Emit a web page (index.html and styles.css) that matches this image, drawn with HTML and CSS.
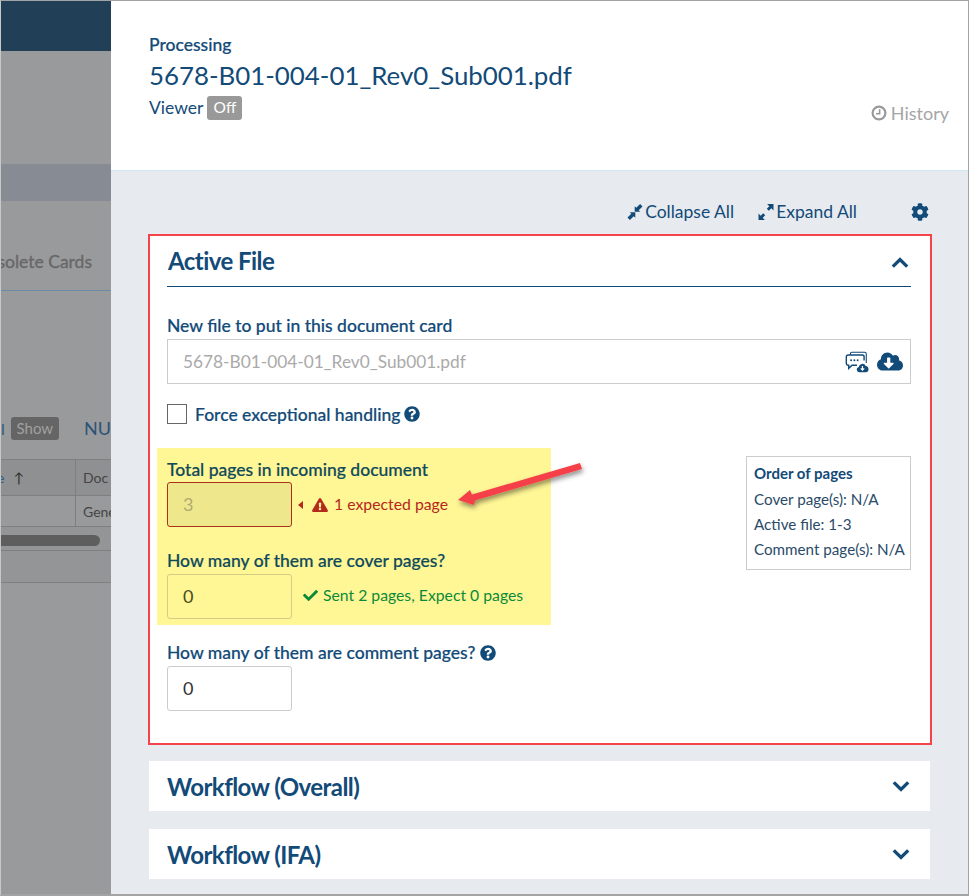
FILE: index.html
```html
<!DOCTYPE html>
<html lang="en">
<head>
<meta charset="utf-8">
<title>Processing</title>
<link rel="stylesheet" href="styles.css">
</head>
<body>
<div class="frame">
  <aside class="backdrop">
    <div class="bd-top"></div>
    <div class="bd-band"></div>
    <div class="bd-tab">Obsolete Cards</div>
    <div class="bd-rule"></div>
    <div class="bd-show"><span class="bd-bar">l</span><span class="bd-badge">Show</span><span class="bd-nu">NU</span></div>
    <div class="bd-row bd-row-head"><span class="bd-c1"><b>e</b> ↑</span><span class="bd-c2">Doc C</span></div>
    <div class="bd-row bd-row-body"><span class="bd-c1"></span><span class="bd-c2">Gene</span></div>
    <div class="bd-scroll"><div class="bd-thumb"></div></div>
    <div class="bd-foot"></div>
  </aside>
  <main class="drawer">
    <header class="head">
      <div class="head-main">
        <div class="proc">Processing</div>
        <div class="fname">5678-B01-004-01_Rev0_Sub001.pdf</div>
        <div class="viewer">Viewer <span class="off">Off</span></div>
      </div>
      <div class="history">
        <svg class="i-clock" viewBox="0 0 16 16"><circle cx="8" cy="8" r="6.4" fill="none" stroke="currentColor" stroke-width="2.2"/><path d="M8.6 4.2v4.6H5" fill="none" stroke="currentColor" stroke-width="1.6"/></svg>
        <span>History</span>
      </div>
    </header>
    <div class="body">
      <div class="tools">
        <span class="tool"><svg class="i-arr" viewBox="0 0 16 16"><path d="M.5 13.6 4.300 9.800 2.800 8.200H8.300V13.700L6.700 12.200 2.900 16ZM15.500 2.400 11.700 6.200 13.200 7.800H7.700V2.300L9.300 3.800 13.100 0Z" fill="currentColor"/></svg>Collapse All</span>
        <span class="tool"><svg class="i-arr" viewBox="0 0 16 16"><path d="M.5 16V9.600L2.700 11.800 5.200 9.300 7.200 11.300 4.700 13.800 6.900 16ZM15.500 0V6.400L13.300 4.200 10.800 6.700 8.800 4.700 11.300 2.200 9.100 0Z" fill="currentColor"/></svg>Expand All</span>
        <svg class="i-cog" viewBox="0 0 512 512"><path fill="currentColor" d="M487.4 315.7l-42.6-24.6c4.3-23.2 4.3-47 0-70.2l42.6-24.6c4.9-2.8 7.1-8.6 5.5-14-11.1-35.6-30-67.8-54.7-94.6-3.8-4.1-10-5.1-14.8-2.3L380.8 110c-17.9-15.4-38.5-27.3-60.8-35.1V25.8c0-5.6-3.9-10.5-9.4-11.7-36.7-8.2-74.3-7.8-109.2 0-5.5 1.2-9.4 6.1-9.4 11.7V75c-22.2 7.9-42.8 19.8-60.8 35.1L88.7 85.5c-4.9-2.8-11-1.9-14.8 2.3-24.7 26.7-43.6 58.9-54.7 94.6-1.7 5.4.6 11.2 5.5 14L67.3 221c-4.3 23.2-4.3 47 0 70.2l-42.6 24.6c-4.9 2.8-7.1 8.6-5.5 14 11.1 35.6 30 67.8 54.7 94.6 3.8 4.1 10 5.1 14.8 2.3l42.6-24.6c17.9 15.4 38.5 27.3 60.8 35.1v49.2c0 5.6 3.9 10.5 9.4 11.7 36.7 8.2 74.3 7.8 109.2 0 5.5-1.2 9.4-6.1 9.4-11.7v-49.2c22.2-7.9 42.8-19.8 60.8-35.1l42.6 24.6c4.9 2.8 11 1.9 14.8-2.3 24.7-26.7 43.6-58.9 54.7-94.6 1.5-5.5-.7-11.3-5.6-14.1zM256 336c-44.1 0-80-35.9-80-80s35.9-80 80-80 80 35.9 80 80-35.9 80-80 80z"/></svg>
      </div>
      <section class="panel">
        <div class="panel-head">
          <h2>Active File</h2>
          <svg class="i-chev" viewBox="0 0 16 10"><path d="M1.6 8.2 8 2l6.4 6.2" fill="none" stroke="currentColor" stroke-width="3"/></svg>
        </div>
        <label class="lbl lbl-file">New file to put in this document card</label>
        <div class="filebox">
          <span>5678-B01-004-01_Rev0_Sub001.pdf</span>
          <svg class="i-chat" viewBox="0 0 22 20"><path d="M5 3.5V2.2C5 1.5 5.5 1 6.2 1H18C18.8 1 19.5 1.6 19.5 2.4V11" fill="none" stroke="currentColor" stroke-width="1"/><path d="M3 3.6H15.800C16.700 3.600 17.500 4.300 17.500 5.200V8.600M11 13H6.500L3.400 15.800V13H3C2 13 1.200 12.200 1.200 11.200V5.400C1.200 4.400 2 3.600 3 3.600" fill="none" stroke="currentColor" stroke-width="1.300"/><circle cx="5.600" cy="8.300" r=".9" fill="currentColor"/><circle cx="8.600" cy="8.300" r=".9" fill="currentColor"/><circle cx="11.600" cy="8.300" r=".9" fill="currentColor"/><path fill="currentColor" d="M13 19.500A2.500 2.500 0 0 1 12.600 14.600 3.400 3.400 0 0 1 19 13.600 3 3 0 0 1 19.200 19.500Z"/><path d="M16 13.600V17.400M14.400 15.800 16 17.400 17.600 15.800" fill="none" stroke="#fff" stroke-width="1.100"/></svg>
          <svg class="i-cloud" viewBox="0 0 640 512"><path fill="currentColor" d="M537.6 226.6c4.1-10.7 6.4-22.4 6.4-34.6 0-53-43-96-96-96-19.7 0-38.1 6-53.3 16.2C367 64.2 315.3 32 256 32c-88.4 0-160 71.6-160 160 0 2.7.1 5.4.2 8.1C40.2 219.8 0 273.2 0 336c0 79.5 64.5 144 144 144h368c70.7 0 128-57.3 128-128 0-61.9-44-113.6-102.4-125.4zm-132.9 88.7L299.3 420.7c-6.2 6.2-16.4 6.2-22.6 0L171.3 315.3c-10.1-10.1-2.9-27.3 11.3-27.3H248V176c0-8.8 7.2-16 16-16h48c8.8 0 16 7.2 16 16v112h65.4c14.2 0 21.4 17.2 11.3 27.3z"/></svg>
        </div>
        <div class="force">
          <span class="check"></span>
          <span>Force exceptional handling</span>
          <svg class="i-q" viewBox="0 0 512 512"><path fill="currentColor" d="M504 256c0 136.997-111.043 248-248 248S8 392.997 8 256C8 119.083 119.043 8 256 8s248 111.083 248 248zM262.655 90c-54.497 0-89.255 22.957-116.549 63.758-3.536 5.286-2.353 12.415 2.715 16.258l34.699 26.31c5.205 3.947 12.621 3.008 16.665-2.122 17.864-22.658 30.113-35.797 57.303-35.797 20.429 0 45.698 13.148 45.698 32.958 0 14.976-12.363 22.667-32.534 33.976C247.128 238.528 216 254.941 216 296v4c0 6.627 5.373 12 12 12h56c6.627 0 12-5.373 12-12v-1.333c0-28.462 83.186-29.647 83.186-106.667 0-58.002-60.165-102-116.531-102zM256 338c-25.365 0-46 20.635-46 46 0 25.364 20.635 46 46 46s46-20.636 46-46c0-25.365-20.635-46-46-46z"/></svg>
        </div>
        <div class="pages">
          <div class="pages-main">
            <div class="hl">
              <label class="lbl">Total pages in incoming document</label>
              <div class="field-row">
                <div class="num num-err">3</div>
                <span class="caret"></span>
                <svg class="i-warn" viewBox="0 0 576 512"><path fill="currentColor" d="M569.517 440.013C587.975 472.007 564.806 512 527.94 512H48.054c-36.937 0-59.999-40.055-41.577-71.987L246.423 23.985c18.467-32.009 64.72-31.951 83.154 0l239.94 416.028zM288 354c-25.405 0-46 20.595-46 46s20.595 46 46 46 46-20.595 46-46-20.595-46-46-46zm-43.673-165.346l7.418 136c.347 6.364 5.609 11.346 11.982 11.346h48.546c6.373 0 11.635-4.982 11.982-11.346l7.418-136c.375-6.874-5.098-12.654-11.982-12.654h-63.383c-6.884 0-12.356 5.78-11.981 12.654z"/></svg>
                <span class="msg-err">1 expected page</span>
              </div>
              <label class="lbl lbl-next">How many of them are cover pages?</label>
              <div class="field-row">
                <div class="num num-hl">0</div>
                <svg class="i-check" viewBox="0 0 512 512"><path fill="currentColor" d="M173.898 439.404l-166.4-166.4c-9.997-9.997-9.997-26.206 0-36.204l36.203-36.204c9.997-9.998 26.207-9.998 36.204 0L192 312.69 432.095 72.596c9.997-9.997 26.207-9.997 36.204 0l36.203 36.204c9.997 9.997 9.997 26.206 0 36.204l-294.4 294.401c-9.998 9.997-26.207 9.997-36.204-.001z"/></svg>
                <span class="msg-ok">Sent 2 pages, Expect 0 pages</span>
              </div>
            </div>
            <label class="lbl lbl-comment">How many of them are comment pages?
              <svg class="i-q" viewBox="0 0 512 512"><path fill="currentColor" d="M504 256c0 136.997-111.043 248-248 248S8 392.997 8 256C8 119.083 119.043 8 256 8s248 111.083 248 248zM262.655 90c-54.497 0-89.255 22.957-116.549 63.758-3.536 5.286-2.353 12.415 2.715 16.258l34.699 26.31c5.205 3.947 12.621 3.008 16.665-2.122 17.864-22.658 30.113-35.797 57.303-35.797 20.429 0 45.698 13.148 45.698 32.958 0 14.976-12.363 22.667-32.534 33.976C247.128 238.528 216 254.941 216 296v4c0 6.627 5.373 12 12 12h56c6.627 0 12-5.373 12-12v-1.333c0-28.462 83.186-29.647 83.186-106.667 0-58.002-60.165-102-116.531-102zM256 338c-25.365 0-46 20.635-46 46 0 25.364 20.635 46 46 46s46-20.636 46-46c0-25.365-20.635-46-46-46z"/></svg>
            </label>
            <div class="num">0</div>
          </div>
          <div class="order">
            <h3>Order of pages</h3>
            <p>Cover page(s): N/A</p>
            <p>Active file: 1-3</p>
            <p>Comment page(s): N/A</p>
          </div>
        </div>
        <svg class="arrow" viewBox="0 0 130 60"><defs><filter id="sh" x="-20%" y="-50%" width="140%" height="220%"><feDropShadow dx="1" dy="3" stdDeviation="2.5" flood-color="#000" flood-opacity=".45"/></filter></defs><path filter="url(#sh)" fill="#f5414a" d="M0 40 12 30 14 34.500 122 3 124 9 17 40.500 16 45Z"/></svg>
      </section>
      <section class="card">
        <h2>Workflow (Overall)</h2>
        <svg class="i-chev" viewBox="0 0 16 10"><path d="M1.600 1.800 8 8l6.400-6.200" fill="none" stroke="currentColor" stroke-width="3"/></svg>
      </section>
      <section class="card">
        <h2>Workflow (IFA)</h2>
        <svg class="i-chev" viewBox="0 0 16 10"><path d="M1.600 1.800 8 8l6.400-6.200" fill="none" stroke="currentColor" stroke-width="3"/></svg>
      </section>
    </div>
  </main>
</div>
</body>
</html>
```

FILE: styles.css
```css
* { box-sizing: border-box; }
html, body { margin: 0; padding: 0; height: 100%; }
body { font-family: Lato, "Open Sans", sans-serif; color: #124a78; overflow: hidden; background: #fff; }
svg { display: block; flex: none; }

.frame { display: flex; width: 969px; height: 896px; border: 1px solid #a3a3a3; border-bottom-width: 2px; border-left-color: #c8c8c8; overflow: hidden; }

/* dimmed page behind the drawer */
.backdrop { width: 110px; flex: none; background: #999a9b; overflow: hidden; color: #555; }
.bd-top { height: 50px; background: #223f58; }
.bd-band { height: 37px; margin-top: 113px; background: #878b93; }
.bd-tab { margin-top: 49px; height: 24px; line-height: 24px; font-size: 17.5px; font-weight: 400; -webkit-text-stroke: .3px #676767; color: #676767; white-space: nowrap; display: flex; justify-content: flex-end; padding-right: 19px; }
.bd-rule { height: 1px; margin-top: 16px; background: #6a8aa8; }
.bd-show { margin-top: 125px; height: 24px; display: flex; align-items: center; white-space: nowrap; }
.bd-bar { color: #2d5a80; font-size: 16px; width: 10px; text-align: right; font-weight: 400; margin-left: -6px; }
.bd-badge { margin-left: 6px; width: 50px; height: 23px; line-height: 23px; text-align: center; background: #656565; color: #a0a0a0; border-radius: 3px; font-size: 15px; }
.bd-nu { margin-left: 25px; font-size: 18px; color: #2a5378; }
.bd-row { display: flex; border-bottom: 1px solid #7f7f7f; white-space: nowrap; font-size: 14px; }
.bd-row-head { margin-top: 19px; height: 37px; border-top: 1px solid #7f7f7f; background: #8f9091; }
.bd-row-body { height: 31px; }
.bd-c1 { width: 75px; flex: none; border-right: 1px solid #7f7f7f; display: flex; align-items: center; font-size: 14px; color: #2b2b2b; }
.bd-c1 b { font-weight: 400; color: #2d5a80; margin-left: -4px; margin-right: 9px; }
.bd-c2 { padding-left: 7px; display: flex; align-items: center; color: #444; overflow: hidden; }
.bd-scroll { height: 24px; border-bottom: 1px solid #7f7f7f; padding-top: 8px; background: #949596; }
.bd-thumb { width: 99px; height: 11px; background: #5e5e5e; border-radius: 0 6px 6px 0; }
.bd-foot { height: 32px; border-bottom: 1px solid #7f7f7f; background: #949596; }

/* drawer */
.drawer { flex: 1; min-width: 0; background: #e7eaef; display: flex; flex-direction: column; position: relative; }
.head { height: 170px; background: #fff; border-bottom: 1px solid #cfe8f5; padding: 32px 19px 0 38px; display: flex; justify-content: space-between; }
.proc { font-size: 17.5px; line-height: 24px; font-weight: 500; -webkit-text-stroke: .2px; }
.fname { font-size: 25.85px; line-height: 36px; }
.viewer { font-size: 17.5px; line-height: 24px; display: flex; align-items: center; gap: 4px; margin-top: 3px; }
.off { background: #999; color: #fff; font-size: 15.5px; width: 35px; text-align: center; height: 24px; line-height: 23px; border-radius: 3px; }
.history { display: flex; align-items: center; gap: 4px; height: 24px; margin-top: 68px; color: #a5a5a5; font-size: 18px; }
.i-clock { width: 16px; height: 16px; color: #999; }

.body { padding: 0 37px 0 37px; }
.tools { height: 63px; padding: 18px 1px 0 0; display: flex; justify-content: flex-end; align-items: center; }
.tool { display: flex; align-items: center; font-size: 17.5px; line-height: 24px; margin-right: 24px; }
.tool + .tool { margin-right: 54px; }
.i-arr { width: 16px; height: 16px; margin-right: 2px; }
.i-cog { width: 18px; height: 18px; margin-right: 1px; }

.panel { position: relative; background: #fff; border: 2px solid #f4444a; width: 784px; height: 511px; padding: 0 19px 0 17px; }
.panel-head { height: 51px; border-bottom: 1px solid #0f4a78; display: flex; justify-content: space-between; align-items: center; padding: 0 2px 0 1px; }
h2 { margin: 0; font-size: 24px; font-weight: 700; line-height: 30px; color: #124a78; letter-spacing: -.55px; }
.panel-head .i-chev { margin-top: 4px; }
.i-chev { width: 18px; height: 12px; color: #124a78; }

.lbl { display: block; font-size: 17.5px; line-height: 24px; font-weight: 500; color: #124a78; -webkit-text-stroke: .2px; }
.lbl-file { margin-top: 27px; height: 25px; }
.filebox { height: 45px; border: 1px solid #ccc; display: flex; align-items: center; padding: 0 7px 0 15px; font-size: 17.3px; color: #124a78; }
.filebox span { flex: 1; color: #aaa; }
.i-chat { width: 24px; height: 22px; margin-right: 8px; }
.i-cloud { width: 26px; height: 21px; }

.force { display: flex; align-items: center; margin-top: 20px; height: 20px; font-size: 17.5px; font-weight: 500; -webkit-text-stroke: .2px; }
.check { width: 20px; height: 20px; border: 1px solid #666; margin-right: 8px; }
.i-q { width: 16px; height: 16px; margin-left: 4px; }
.lbl .i-q { display: inline-block; vertical-align: -2px; margin-left: 0; }

.pages { display: flex; justify-content: space-between; margin-top: 24px; }
.hl { margin-left: -10px; width: 394px; height: 177px; background: #fff695; padding: 10px 0 0 10px; }
.hl .lbl { color: #0f4a5c; }
.field-row { display: flex; align-items: center; height: 45px; }
.lbl-next { margin-top: 22px; height: 25px; }
.num { width: 125px; height: 45px; border: 1px solid #ccc; border-radius: 3px; font-size: 18px; line-height: 43px; padding-left: 15px; color: #333; }
.num-err { border-color: #a8321c; background: #efe78c; color: #b0ab72; }
.num-hl { border-color: #d4cc86; background: #fff695; color: #4a4a1f; }
.caret { width: 0; height: 0; border: 4px solid transparent; border-right: 5px solid #b5281d; border-left: 0; margin-left: 6px; margin-right: 9px; }
.i-warn { width: 16px; height: 14px; color: #b5281d; margin-right: 6px; }
.msg-err { font-size: 15.8px; color: #b5281d; margin-top: -2px; }
.i-check { width: 15px; height: 15px; color: #0b8a3a; margin: -2px 5px 0 11px; }
.msg-ok { font-size: 15.75px; color: #0b8a3a; margin-top: -4px; }
.lbl-comment { margin-top: 16px; height: 25px; }

.order { width: 165px; height: 114px; margin-top: 8px; border: 1px solid #ccc; padding: 5px 0 0 7px; font-size: 15.2px; line-height: 25px; color: #2a4a68; }
.order h3 { margin: 0 0 3px; font-size: 15px; font-weight: 700; line-height: 22px; color: #124a78; }
.order p { margin: 0; }

.arrow { position: absolute; left: 308px; top: 224px; width: 130px; height: 60px; overflow: visible; }

.card { width: 781px; height: 50px; margin: 16px 0 0 1px; background: #fff; display: flex; align-items: center; justify-content: space-between; padding: 0 20px 0 18px; }
.card + .card { margin-top: 18px; }
.card h2 { margin-top: 1px; }
```
